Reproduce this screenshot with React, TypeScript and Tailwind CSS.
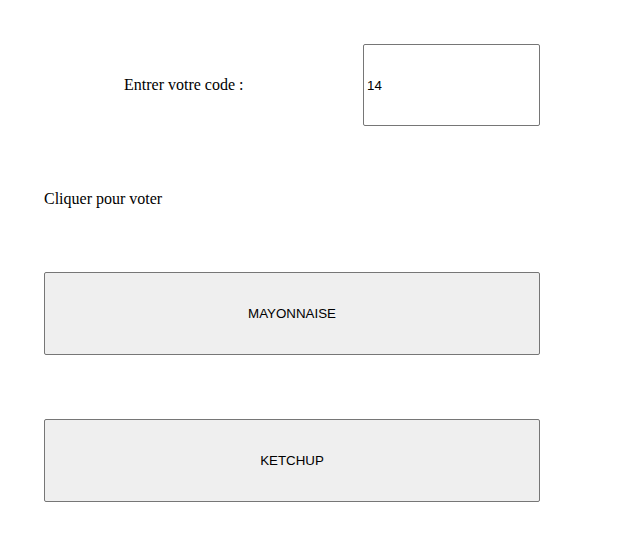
import { useState } from "react";

const choices = ["MAYONNAISE", "KETCHUP"];

export default function App() {
  const [code, setCode] = useState("14");

  return (
    <div className="w-[621px] h-[540px] bg-white text-black font-['Liberation_Serif',serif]">
      <div className="ml-[44px] w-[496px] pt-[44px] flex flex-col">
        {/* ligne du code */}
        <div className="flex items-center justify-between h-[82px]">
          <span className="pl-[80px] text-base leading-[18px]">Entrer votre code :</span>
          <input
            value={code}
            onChange={(e) => setCode(e.target.value)}
            className="w-[177px] h-[82px] border border-[#767676] rounded-[2px] px-[3px] text-[13.33px] font-['Liberation_Sans',sans-serif] text-black outline-none"
          />
        </div>

        <p className="mt-[64px] text-base leading-[18px]">Cliquer pour voter</p>

        {choices.map((c) => (
          <button
            key={c}
            className="mt-[64px] h-[83px] w-full bg-[#efefef] border border-[#767676] rounded-[2px] text-[13.33px] font-['Liberation_Sans',sans-serif] text-black"
          >
            {c}
          </button>
        ))}
      </div>
    </div>
  );
}
